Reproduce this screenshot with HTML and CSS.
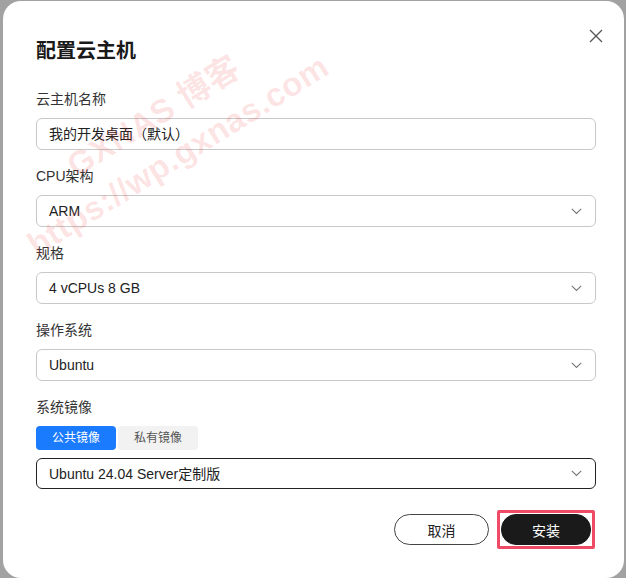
FILE: index.html
```html
<!DOCTYPE html>
<html lang="zh-CN">
<head>
<meta charset="utf-8">
<title>配置云主机</title>
<link rel="stylesheet" href="styles.css">
</head>
<body>
<div class="dialog">
  <div class="header">
    <h1 class="title">配置云主机</h1>
    <span class="close">
      <svg width="14" height="14" viewBox="0 0 14 14"><path d="M1 1L13 13M13 1L1 13" stroke="#555" stroke-width="1.3" fill="none"/></svg>
    </span>
  </div>

  <div class="field field-first">
    <div class="label">云主机名称</div>
    <div class="control">我的开发桌面（默认）</div>
  </div>

  <div class="field">
    <div class="label">CPU架构</div>
    <div class="control select"><span>ARM</span>
      <svg class="chev" width="11" height="7" viewBox="0 0 11 7"><polyline points="0.8,0.8 5.5,5.5 10.2,0.8" stroke="#777" stroke-width="1.1" fill="none"/></svg>
    </div>
  </div>

  <div class="field">
    <div class="label">规格</div>
    <div class="control select"><span>4 vCPUs 8 GB</span>
      <svg class="chev" width="11" height="7" viewBox="0 0 11 7"><polyline points="0.8,0.8 5.5,5.5 10.2,0.8" stroke="#777" stroke-width="1.1" fill="none"/></svg>
    </div>
  </div>

  <div class="field">
    <div class="label">操作系统</div>
    <div class="control select"><span>Ubuntu</span>
      <svg class="chev" width="11" height="7" viewBox="0 0 11 7"><polyline points="0.8,0.8 5.5,5.5 10.2,0.8" stroke="#777" stroke-width="1.1" fill="none"/></svg>
    </div>
  </div>

  <div class="field">
    <div class="label">系统镜像</div>
    <div class="tabs">
      <span class="tab active">公共镜像</span>
      <span class="tab">私有镜像</span>
    </div>
    <div class="control select focused"><span>Ubuntu 24.04 Server定制版</span>
      <svg class="chev" width="11" height="7" viewBox="0 0 11 7"><polyline points="0.8,0.8 5.5,5.5 10.2,0.8" stroke="#777" stroke-width="1.1" fill="none"/></svg>
    </div>
  </div>

  <div class="footer">
    <button class="btn btn-cancel">取消</button>
    <span class="highlight"><button class="btn btn-primary">安装</button></span>
  </div>
</div>

<div class="watermark">
  <div>GXNAS 博客</div>
  <div>https://wp.gxnas.com</div>
</div>
</body>
</html>
```

FILE: styles.css
```css
html, body {
  margin: 0;
  padding: 0;
}
body {
  width: 626px;
  height: 578px;
  background: #a2a2a2;
  overflow: hidden;
  position: relative;
  font-family: "Liberation Sans", "Noto Sans CJK SC", sans-serif;
  color: #222;
}
.dialog {
  box-sizing: border-box;
  margin: 1px 0 0 3px;
  width: 621px;
  height: 577px;
  background: #fff;
  border-radius: 18px;
  padding: 36px 28px 0 33px;
}
.header {
  display: flex;
  justify-content: space-between;
  align-items: flex-start;
  height: 28px;
}
.title {
  margin: 0;
  font-size: 20px;
  font-weight: bold;
  line-height: 28px;
  color: #1a1a1a;
}
.close {
  display: flex;
  margin-top: -8px;
  margin-right: -7px;
}
.field {
  display: flex;
  flex-direction: column;
  gap: 8px;
  margin-top: 15px;
}
.field-first {
  margin-top: 23px;
}
.label {
  font-size: 14px;
  line-height: 22px;
  color: #333;
}
.control {
  box-sizing: border-box;
  height: 32px;
  border: 1px solid #c8c8c8;
  border-radius: 6px;
  padding: 0 13px 0 12px;
  font-size: 14px;
  line-height: 30px;
  color: #222;
  display: flex;
  align-items: center;
}
.select {
  justify-content: space-between;
}
.chev {
  display: block;
}
.focused {
  border-color: #222;
  height: 31px;
}
.tabs {
  display: flex;
  gap: 2px;
}
.tab {
  width: 80px;
  height: 24px;
  border-radius: 4px;
  font-size: 12px;
  line-height: 24px;
  text-align: center;
  background: #f2f2f2;
  color: #555;
}
.tab.active {
  background: #1a7bff;
  color: #fff;
}
.footer {
  display: flex;
  justify-content: flex-end;
  align-items: center;
  gap: 8px;
  margin-top: 21px;
  padding-right: 1px;
}
.btn {
  box-sizing: border-box;
  width: 95px;
  height: 31px;
  border-radius: 16px;
  font-family: inherit;
  font-size: 14px;
  padding: 0;
  cursor: pointer;
  display: block;
}
.btn-cancel {
  background: #fff;
  border: 1px solid #444;
  color: #222;
}
.highlight {
  display: block;
  border: 3px solid #f04b66;
  border-radius: 2px;
  padding: 1px;
}
.btn-primary {
  width: 90px;
  background: #1a1a1a;
  border: 1px solid #1a1a1a;
  color: #fff;
  border-radius: 15px;
}
.watermark {
  position: absolute;
  left: 166px;
  top: 136px;
  transform: translate(-50%, -50%) rotate(-32deg);
  text-align: center;
  font-family: "Liberation Sans", "Noto Sans CJK SC", sans-serif;
  font-weight: bold;
  font-size: 33px;
  letter-spacing: 0.5px;
  line-height: 46px;
  color: rgba(240, 40, 40, 0.13);
  white-space: nowrap;
  pointer-events: none;
}
```
